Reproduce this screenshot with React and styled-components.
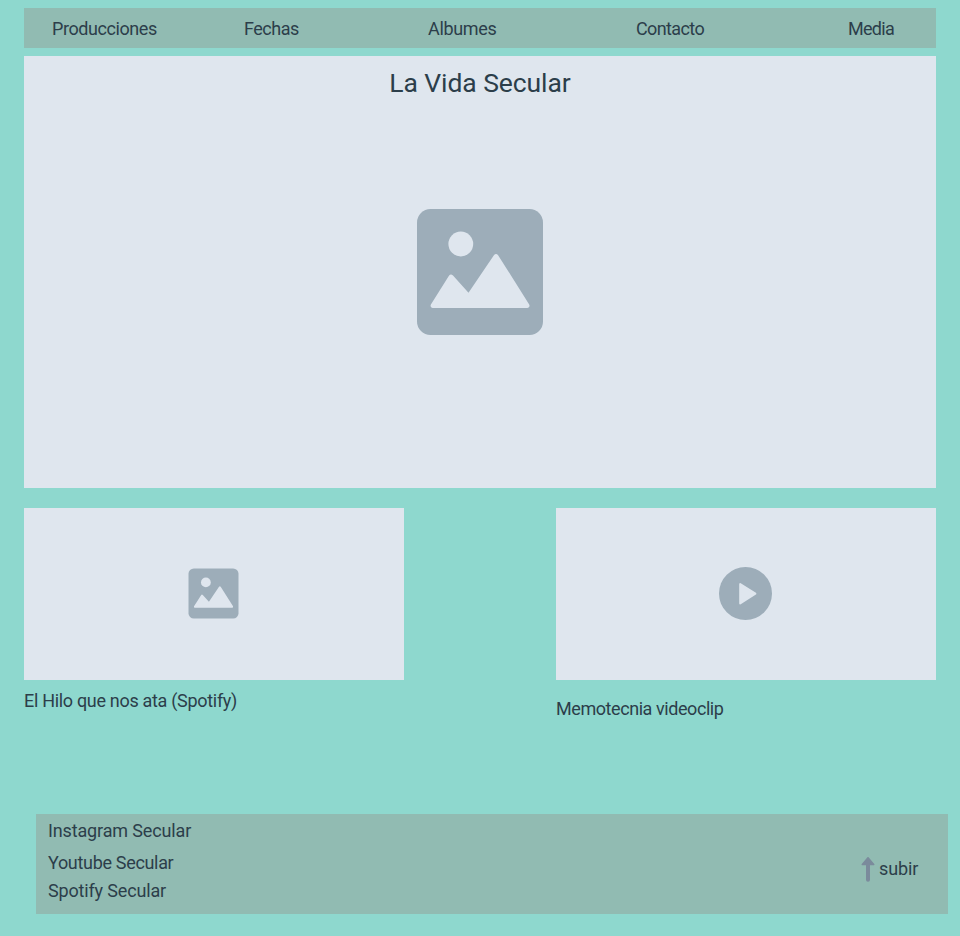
import React from 'react';
import styled, { createGlobalStyle } from 'styled-components';

const GlobalStyle = createGlobalStyle`
  * { box-sizing: border-box; }
  body {
    margin: 0;
    background: #8ed8ce;
    color: #2c3e4a;
    font-family: Roboto, 'Liberation Sans', sans-serif;
  }
`;

const Page = styled.div`
  width: 960px;
  height: 936px;
  padding: 8px 12px 22px 24px;
  display: flex;
  flex-direction: column;
`;

const Label = styled.span`
  display: block;
  font-size: 18px;
  line-height: 24px;
  white-space: nowrap;
  letter-spacing: ${(p) => p.$track}px;
`;

const NavBar = styled.nav`
  width: 912px;
  height: 40px;
  padding-left: 28px;
  background: #91bbb2;
  display: grid;
  grid-template-columns: 192px 184px 208px 212px auto;
  align-items: center;
`;

const NavLink = styled(Label)`
  padding-top: 2px;
`;

const Hero = styled.section`
  width: 912px;
  height: 432px;
  margin-top: 8px;
  padding-top: 11px;
  background: #dfe6ee;
  display: flex;
  flex-direction: column;
  align-items: center;
`;

const Title = styled.h1`
  margin: 0 0 110px;
  font-size: 26.5px;
  line-height: 32px;
  font-weight: 400;
  letter-spacing: -0.08px;
`;

const Cards = styled.div`
  width: 912px;
  margin-top: 20px;
  display: flex;
  justify-content: space-between;
`;

const Card = styled.article`
  width: 380px;
`;

const Thumb = styled.div`
  height: 172px;
  background: #dfe6ee;
  display: flex;
  align-items: center;
  justify-content: center;
  padding: 0 1px 1px 0;
`;

const Caption = styled(Label)`
  margin-top: ${(p) => p.$gap}px;
`;

const Footer = styled.footer`
  width: 912px;
  height: 100px;
  margin: auto 0 0 auto;
  padding: 5px 29px 0 12px;
  background: #91bbb2;
  display: flex;
  justify-content: space-between;
`;

const Links = styled.div`
  display: grid;
  grid-template-rows: 32px 28px 24px;
`;

const UpLink = styled.div`
  height: 26px;
  margin-top: 37px;
  display: grid;
  grid-template-columns: 14px 40px;
  align-items: center;
  column-gap: 4px;
`;

const PictureIcon = ({ size, viewBox = '0 0 126 126' }) => (
  <svg width={size} height={size} viewBox={viewBox}>
    <rect width="126" height="126" rx="13.5" fill="#9dadb9" />
    <circle cx="43.8" cy="35" r="12.4" fill="#dfe6ee" />
    <path
      d="M32.1 66.6Q33.9 64.2 36 66.6L51.5 83.8L76.9 46.2Q79 43.6 81.1 46.2L112.2 95.4Q113.4 98.3 110.4 99H15.6Q12.7 98.3 13.9 95.4Z"
      fill="#dfe6ee"
    />
  </svg>
);

const PlayIcon = () => (
  <svg width="53" height="53" viewBox="0 0 53 53">
    <circle cx="26.5" cy="26.5" r="26.5" fill="#9dadb9" />
    <path
      d="M21.2 17V36.4L36.4 26.7Z"
      fill="#dfe6ee"
      stroke="#dfe6ee"
      strokeWidth="2"
      strokeLinejoin="round"
    />
  </svg>
);

const UpArrow = () => (
  <svg width="14" height="26" viewBox="0 0 14 26">
    <path
      d="M7 1.8 1.3 8.4H12.7Z"
      fill="#7b8b9c"
      stroke="#7b8b9c"
      strokeWidth="1.6"
      strokeLinejoin="round"
    />
    <path d="M7 8V23.8" stroke="#7b8b9c" strokeWidth="4" strokeLinecap="round" />
  </svg>
);

const navItems = [
  { text: 'Producciones', track: -0.42 },
  { text: 'Fechas', track: -0.5 },
  { text: 'Albumes', track: -0.32 },
  { text: 'Contacto', track: -0.62 },
  { text: 'Media', track: -0.7 },
];

const socialLinks = [
  { text: 'Instagram Secular', track: -0.14 },
  { text: 'Youtube Secular', track: -0.32 },
  { text: 'Spotify Secular', track: -0.16 },
];

export default function App() {
  return (
    <>
      <GlobalStyle />
      <Page>
        <NavBar>
          {navItems.map((item) => (
            <NavLink key={item.text} $track={item.track}>{item.text}</NavLink>
          ))}
        </NavBar>
        <Hero>
          <Title>La Vida Secular</Title>
          <PictureIcon size={126} />
        </Hero>
        <Cards>
          <Card>
            <Thumb><PictureIcon size={51} viewBox="-1.26 -1.26 128.52 128.52" /></Thumb>
            <Caption $gap={9} $track={-0.31}>El Hilo que nos ata (Spotify)</Caption>
          </Card>
          <Card>
            <Thumb><PlayIcon /></Thumb>
            <Caption $gap={17} $track={-0.43}>Memotecnia videoclip</Caption>
          </Card>
        </Cards>
        <Footer>
          <Links>
            {socialLinks.map((item) => (
              <Label key={item.text} $track={item.track}>{item.text}</Label>
            ))}
          </Links>
          <UpLink>
            <UpArrow />
            <Label $track={-0.1}>subir</Label>
          </UpLink>
        </Footer>
      </Page>
    </>
  );
}
